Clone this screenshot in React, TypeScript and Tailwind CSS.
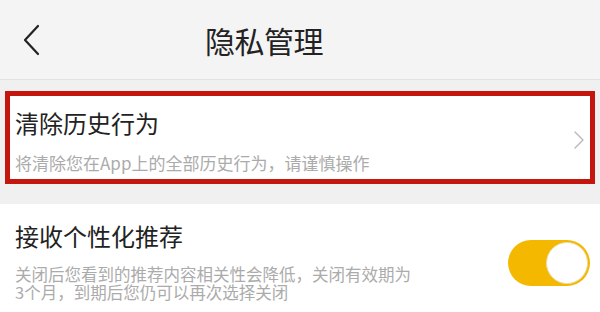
import React from "react"

function BackIcon() {
  return (
    <svg width="18" height="32" viewBox="0 0 18 32" fill="none">
      <path d="M16 2 L3 16 L16 30" stroke="#222" strokeWidth="2.2" strokeLinecap="round" strokeLinejoin="round" />
    </svg>
  )
}

function ChevronRight() {
  return (
    <svg width="12" height="20" viewBox="0 0 12 20" fill="none">
      <path d="M2 2 L10 10 L2 18" stroke="#b8b8b8" strokeWidth="1.4" strokeLinecap="round" strokeLinejoin="round" />
    </svg>
  )
}

function Toggle() {
  return (
    <div className="w-[82px] h-[46px] rounded-full bg-[#f5b800] flex items-center justify-end pr-[2px]">
      <div className="w-[42px] h-[42px] rounded-full bg-white border border-[#e9dcae]" />
    </div>
  )
}

export default function App() {
  return (
    <div
      className="w-[600px] h-[312px] overflow-hidden bg-[#f0f0f0] flex flex-col"
      style={{ fontFamily: '"Noto Sans CJK SC", "Noto Sans", sans-serif' }}
    >
      <header className="h-[80px] shrink-0 bg-[#f4f4f4] border-b border-[#e2e2e2] flex items-center pl-[22px]">
        <BackIcon />
        <h1 className="ml-[165px] text-[30px] leading-none text-[#222] font-normal tracking-[-0.5px]">隐私管理</h1>
      </header>

      <div className="h-[11px] shrink-0" />

      <section className="mx-[5px] h-[93px] shrink-0 border-[5px] border-[#c5150f] bg-white flex items-center">
        <div className="flex-1 pl-[5px] pt-[6px]">
          <div className="text-[24px] leading-[34px] text-[#222]">清除历史行为</div>
          <div className="mt-[11px] text-[17px] leading-[24px] text-[#ababab]">将清除您在App上的全部历史行为，请谨慎操作</div>
        </div>
        <div className="pr-[5px] pt-[4px]">
          <ChevronRight />
        </div>
      </section>

      <div className="h-[20px] shrink-0" />

      <section className="flex-1 bg-white flex items-start pl-[15px] pr-[10px] pt-[15px]">
        <div className="flex-1">
          <div className="text-[24px] leading-[34px] text-[#222]">接收个性化推荐</div>
          <div className="mt-[12px] text-[16.5px] leading-[18px] text-[#ababab]">
            关闭后您看到的推荐内容相关性会降低，关闭有效期为
            <br />
            3个月，到期后您仍可以再次选择关闭
          </div>
        </div>
        <div className="pt-[21px]">
          <Toggle />
        </div>
      </section>
    </div>
  )
}
